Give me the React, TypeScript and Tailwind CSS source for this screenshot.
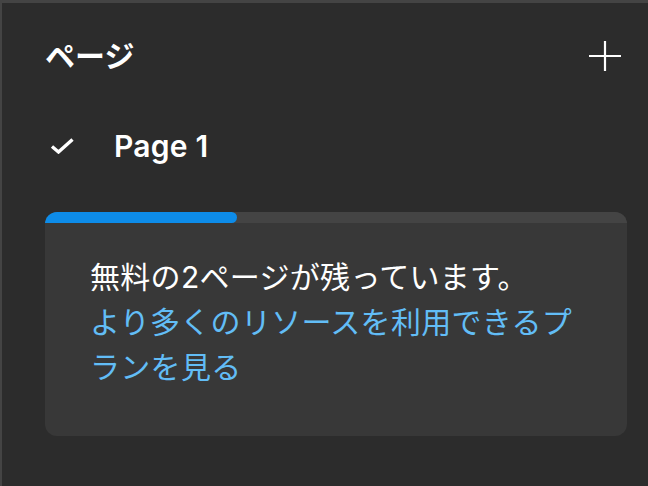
import React from "react";

const FONT = { fontFamily: 'Inter, "Noto Sans CJK JP", sans-serif' };

export default function App() {
  return (
    <div
      style={FONT}
      className="flex h-[486px] w-[648px] flex-col border-l-2 border-t-[3px] border-[#444444] bg-[#2c2c2c] text-white"
    >
      {/* header: title + add page */}
      <div className="mt-[29px] flex h-[48px] items-center justify-between pl-[43px] pr-[27px]">
        <h2 className="text-[30px] font-bold leading-none">ページ</h2>
        <svg width="32" height="32" viewBox="0 0 32 32" fill="none">
          <path d="M16 1v30M0 16h32" stroke="#ffffff" strokeWidth="2.2" />
        </svg>
      </div>

      {/* page list */}
      <div className="mt-[42px] flex h-[48px] items-center pl-[48px]">
        <svg width="24" height="16" viewBox="0 0 24 16" fill="none" className="shrink-0">
          <path d="M2 8.5 8.5 14 22.5 1.5" stroke="#ffffff" strokeWidth="3.4" />
        </svg>
        <span className="ml-[40px] text-[30px] font-semibold leading-none tracking-[0.2px]">Page 1</span>
      </div>

      {/* free plan usage card */}
      <div className="ml-[43px] mt-[42px] h-[224px] w-[582px] overflow-hidden rounded-[12px] bg-[#383838]">
        <div className="h-[11px] w-full bg-[#444444]">
          <div className="h-full w-[192px] rounded-r-full bg-[#0d8ce9]" />
        </div>
        <p className="pl-[45px] pr-[36px] pt-[32px] text-[30px] leading-[45px] tracking-[0.3px]">
          無料の2ページが残っています。
          <br />
          <a href="#" className="text-[#62bdf6]">
            より多くのリソースを利用できるプランを見る
          </a>
        </p>
      </div>
    </div>
  );
}
